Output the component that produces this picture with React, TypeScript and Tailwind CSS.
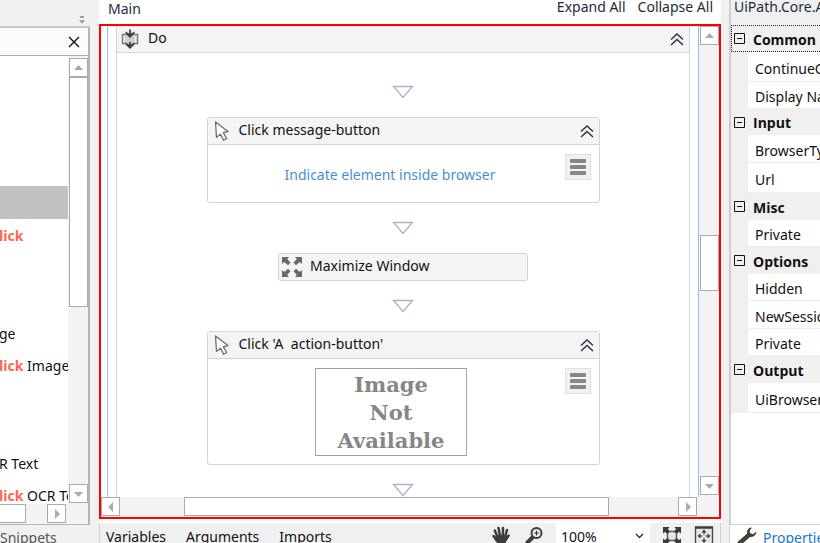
import React from "react";

type Direction = "up" | "down" | "left" | "right";

const arrowPoints: Record<Direction, string> = {
  up: "0,7 4.5,2 9,7",
  down: "0,3 4.5,8 9,3",
  left: "7,0 2,5 7,10",
  right: "3,0 8,5 3,10",
};

function ScrollButton({ direction }: { direction: Direction }) {
  return (
    <button
      type="button"
      aria-label={`Scroll ${direction}`}
      className="flex size-[19px] shrink-0 items-center justify-center border border-[#ababab] bg-white"
    >
      <svg width="10" height="10" viewBox="0 0 10 10" aria-hidden="true">
        <polygon points={arrowPoints[direction]} fill="#ababab" />
      </svg>
    </button>
  );
}

function DoubleChevron() {
  return (
    <button type="button" aria-label="Collapse" className="flex size-5 items-center justify-center">
      <svg width="14" height="14" viewBox="0 0 14 14" fill="none" stroke="#273245" strokeWidth="1.4" aria-hidden="true">
        <path d="M1 7.500 7 2 13 7.500M1 13 7 7.500 13 13" />
      </svg>
    </button>
  );
}

function CursorIcon() {
  return (
    <svg width="16" height="20" viewBox="0 0 16 20" fill="#fff" stroke="#6e6e6e" strokeWidth="1.3" strokeLinejoin="round" aria-hidden="true">
      <path d="M2.500 1 15 10.500 10.300 11.600 13.600 17.500 10.600 19.300 7.600 13.200 3.500 16.300Z" />
    </svg>
  );
}

function SequenceIcon() {
  return (
    <svg width="18" height="20" viewBox="0 0 18 20" aria-hidden="true">
      <path d="M4 5H14V15H4Z" fill="#d0d0d0" />
      <path d="M5 5.500H1.500V14.500H5M13 5.500H16.500V14.500H13" fill="none" stroke="#777" strokeWidth="1.500" />
      <path d="M9 .5V6M9 13V18" fill="none" stroke="#404040" strokeWidth="1.800" />
      <path d="M4.500 2.500 9 5 13.500 2.500V4.500L9 9 4.500 4.500ZM4.500 13.500 9 16 13.500 13.500V15.500L9 20 4.500 15.500Z" fill="#404040" />
    </svg>
  );
}

function MaximizeIcon() {
  return (
    <svg width="20" height="20" viewBox="0 0 20 20" fill="#686868" aria-hidden="true">
      <path d="M0 0H7L5.200 2 8.500 5.800 6 8.200 2.300 5 0 7Z" />
      <path d="M20 0V7L17.700 5 14 8.200 11.500 5.800 14.800 2 13 0Z" />
      <path d="M0 20V13L2.300 15 6 11.800 8.500 14.200 5.200 18 7 20Z" />
      <path d="M20 20H13L14.800 18 11.500 14.200 14 11.800 17.700 15 20 13Z" />
    </svg>
  );
}

function Connector() {
  return (
    <svg className="mx-auto block" width="22" height="14" viewBox="0 0 22 14" fill="none" stroke="#a9b4c6" strokeWidth="1.4" aria-hidden="true">
      <path d="M1.500 1.500H20.500L11 12.500Z" />
    </svg>
  );
}

function MenuButton() {
  return (
    <button
      type="button"
      aria-label="Options menu"
      className="absolute top-[9px] right-2 flex size-[26px] flex-col items-center justify-center gap-[2px] border border-[#dbe0ea] bg-[#f1f1f1]"
    >
      <span className="h-1 w-4 rounded-[1px] bg-[#868686]" />
      <span className="h-1 w-4 rounded-[1px] bg-[#868686]" />
      <span className="h-1 w-4 rounded-[1px] bg-[#868686]" />
    </button>
  );
}

function ActivityCard({ title, children }: { title: string; children: React.ReactNode }) {
  return (
    <article className="mx-auto w-[393px] rounded-[3px] border border-[#d3d3d3] bg-white">
      <header className="flex h-[27px] items-center border-b border-[#d3d3d3] bg-[#f4f4f4] pr-[2px] pl-[5px]">
        <CursorIcon />
        <h3 className="ml-[10px] flex-1 pb-[2px] whitespace-pre">{title}</h3>
        <DoubleChevron />
      </header>
      <div className="relative">
        {children}
        <MenuButton />
      </div>
    </article>
  );
}

const treeRows: { match?: string; rest?: string; selected?: boolean }[] = [
  {},
  {},
  {},
  {},
  { selected: true },
  { match: "lick" },
  {},
  {},
  { rest: "ge" },
  { match: "lick", rest: " Image" },
  {},
  {},
  { rest: "R Text" },
  { match: "lick", rest: " OCR Text" },
];

function ActivitiesPanel() {
  return (
    <aside className="flex w-[99px] shrink-0 flex-col bg-[#f1f1f1] pr-[9px]">
      <div className="flex h-7 shrink-0 items-end justify-end border-b-2 border-[#c6c6c6] pr-1 pb-[2px]">
        <svg width="8" height="8" viewBox="0 0 8 8" fill="#a0a0a0" aria-hidden="true">
          <path d="M2 0H6V2H2ZM1 4H7L4 8Z" />
        </svg>
      </div>
      <div className="flex min-h-0 flex-1 flex-col border-r-2 border-b border-[#b4b4b4]">
        <div className="flex h-7 shrink-0 items-center justify-end border-b border-[#ababab] bg-[#fcfcfc] pr-2">
          <button type="button" aria-label="Clear search">
            <svg width="12" height="12" viewBox="0 0 12 12" stroke="#111" strokeWidth="1.4" aria-hidden="true">
              <path d="M1 1 11 11M11 1 1 11" />
            </svg>
          </button>
        </div>
        <div className="flex min-h-0 flex-1">
          <ul className="min-w-0 flex-1 overflow-hidden bg-white">
            {treeRows.map((row, i) => (
              <li
                key={i}
                className={`-ml-px flex items-center pt-[2px] whitespace-pre odd:h-[33px] even:h-8 ${row.selected ? "bg-[#c2c2c2]" : ""}`}
              >
                {row.match && <b className="font-['Open_Sans',sans-serif] text-[#ff6550]">{row.match}</b>}
                {row.rest}
              </li>
            ))}
          </ul>
          <div className="flex w-5 shrink-0 flex-col items-start bg-[#f3f3f3] pt-[2px] pb-px pl-px">
            <ScrollButton direction="up" />
            <div className="h-[230px] w-[19px] border border-[#ababab] bg-white" />
            <div className="flex-1" />
            <ScrollButton direction="down" />
          </div>
        </div>
        <div className="flex h-5 shrink-0 items-start bg-[#f3f3f3] pr-[22px]">
          <div className="h-[19px] w-[26px] border border-l-0 border-[#ababab] bg-white" />
          <div className="flex-1" />
          <ScrollButton direction="right" />
        </div>
      </div>
      <div className="h-[18px] shrink-0 pt-1 leading-[18px] text-[#555]">Snippets</div>
    </aside>
  );
}

function HandIcon() {
  return (
    <svg width="18" height="20" viewBox="0 0 18 20" fill="none" stroke="#3c3c3c" strokeWidth="2.500" strokeLinecap="round" aria-hidden="true">
      <path d="M5.500 11 2.800 4.500M8 10 6.500 2M10.800 10 11 2M13 11 15 4M4.500 14 1.500 10M13.500 14 16.600 9.500" />
      <path d="M4.500 9.500H13.500L15.500 12 12 19H7L3.500 14Z" fill="#3c3c3c" strokeWidth="1" />
    </svg>
  );
}

function MagnifierIcon() {
  return (
    <svg width="18" height="20" viewBox="0 0 18 20" fill="none" stroke="#3c3c3c" aria-hidden="true">
      <circle cx="11.500" cy="7" r="5" strokeWidth="2" />
      <path d="M9 7H14M11.500 4.500V9.500" strokeWidth="1.200" />
      <path d="M8 11 1.500 17.500" strokeWidth="4" />
    </svg>
  );
}

function FitIcon() {
  return (
    <svg width="20" height="20" viewBox="0 0 20 20" fill="#3c3c3c" aria-hidden="true">
      <rect x="5.500" y="5.500" width="9" height="9" fill="#e6e6e6" stroke="#555" strokeWidth="1.400" />
      <path d="M1 1H7.500L6 3 8 5.500 5.500 8 3 6 1 7.500ZM19 1H12.500L14 3 12 5.500 14.500 8 17 6 19 7.500ZM1 19H7.500L6 17 8 14.500 5.500 12 3 14 1 12.500ZM19 19H12.500L14 17 12 14.500 14.500 12 17 14 19 12.500Z" />
    </svg>
  );
}

function OverviewIcon() {
  return (
    <svg width="20" height="20" viewBox="0 0 20 20" aria-hidden="true">
      <rect x="1.500" y="1.500" width="17" height="17" fill="#e6e6e6" stroke="#4a4a4a" strokeWidth="1.400" />
      <path d="M1 1.500H19" stroke="#3c3c3c" strokeWidth="2.400" />
      <path d="M10 3.500 12.500 6.500H7.500ZM10 17 12.500 14H7.500ZM3.500 10 6.500 7.500V12.500ZM16.500 10 13.500 7.500V12.500Z" fill="#3c3c3c" />
      <path d="M10 5V8.500M10 12V15M5 10H8.500M11.500 10H15" stroke="#3c3c3c" strokeWidth="1.200" />
    </svg>
  );
}

function DesignerPanel() {
  return (
    <main className="flex min-w-0 flex-1 flex-col bg-white">
      <div className="flex h-6 shrink-0 items-start pr-2 pl-[9px] text-[#1e2a3a]">
        <span className="flex-1 leading-[18px]">Main</span>
        <button type="button" className="mr-3 leading-[14px]">Expand All</button>
        <button type="button" className="leading-[14px]">Collapse All</button>
      </div>

      <div className="flex min-h-0 flex-1 flex-col border-2 border-[#ff0000]">
        <div className="flex min-h-0 flex-1">
          <div className="flex min-w-0 flex-1 pl-[6px]">
            <div className="flex min-w-0 flex-1 border-x border-[#8cc4e8] px-2">
              <section className="min-w-0 flex-1 overflow-hidden border-x border-[#d3d3d3]">
                <header className="flex h-[27px] items-center border-b border-[#d3d3d3] bg-[#f4f4f4] pr-[2px] pl-1">
                  <SequenceIcon />
                  <h2 className="ml-[9px] flex-1 pb-[2px]">Do</h2>
                  <DoubleChevron />
                </header>
                <div className="pt-8">
                  <Connector />
                  <div className="h-[18px]" />
                  <ActivityCard title="Click message-button">
                    <div className="flex h-[57px] items-center justify-center pt-[2px] pr-[26px]">
                      <a href="#indicate" className="text-[#468fd2]">Indicate element inside browser</a>
                    </div>
                  </ActivityCard>
                  <div className="h-[18px]" />
                  <Connector />
                  <div className="h-[18px]" />
                  <article className="mx-auto flex h-7 w-[250px] items-center rounded-[3px] border border-[#d3d3d3] bg-[#f4f4f4] pl-[3px]">
                    <MaximizeIcon />
                    <h3 className="ml-2 pb-[2px]">Maximize Window</h3>
                  </article>
                  <div className="h-[18px]" />
                  <Connector />
                  <div className="h-[18px]" />
                  <ActivityCard title="Click 'A  action-button'">
                    <div className="flex h-[105px] justify-center pt-[9px] pr-6">
                      <div className="h-[88px] w-[152px] border border-[#a3a3a3] pt-[2px] text-center font-['DejaVu_Serif',serif] text-[21px] leading-7 font-bold text-[#868686]">
                        Image
                        <br />
                        Not
                        <br />
                        Available
                      </div>
                    </div>
                  </ActivityCard>
                  <div className="h-[18px]" />
                  <Connector />
                </div>
              </section>
            </div>
          </div>
          <div className="flex w-5 shrink-0 flex-col bg-[#f3f3f3] pb-[2px] pl-px">
            <ScrollButton direction="up" />
            <div className="flex-[190]" />
            <div className="h-[56px] w-[19px] border border-[#ababab] bg-white" />
            <div className="flex-[186]" />
            <ScrollButton direction="down" />
          </div>
        </div>
        <div className="flex h-5 shrink-0 bg-[#f3f3f3] pr-[22px]">
          <ScrollButton direction="left" />
          <div className="flex-[64]" />
          <div className="h-[19px] w-[425px] border border-[#ababab] bg-white" />
          <div className="flex-[70]" />
          <ScrollButton direction="right" />
        </div>
      </div>

      <footer className="mt-1 flex h-5 shrink-0 items-start border-x border-[#cfcfcf] bg-[#f0f0f0] pl-[6px]">
        <nav className="flex flex-1 gap-5 pt-1">
          <button type="button">Variables</button>
          <button type="button">Arguments</button>
          <button type="button">Imports</button>
        </nav>
        <button type="button" aria-label="Pan" className="mt-[3px] mr-[15px]">
          <HandIcon />
        </button>
        <button type="button" aria-label="Zoom" className="mt-[3px] mr-[13px]">
          <MagnifierIcon />
        </button>
        <div className="relative h-5 w-[94px] bg-white">
          <select aria-label="Zoom level" className="h-6 w-full appearance-none bg-transparent pt-[3px] pl-[5px]">
            <option>100%</option>
          </select>
          <svg className="pointer-events-none absolute top-[10px] right-[6px]" width="9" height="6" viewBox="0 0 9 6" fill="none" stroke="#333" strokeWidth="1.400" aria-hidden="true">
            <path d="M1 1 4.500 4.500 8 1" />
          </svg>
        </div>
        <button type="button" aria-label="Fit to screen" className="mt-[3px] ml-3">
          <FitIcon />
        </button>
        <button type="button" aria-label="Overview" className="mt-[3px] mr-[6px] ml-3">
          <OverviewIcon />
        </button>
      </footer>
    </main>
  );
}

const propertyGroups: { name: string; height: string; items: { label: string; height: string }[] }[] = [
  {
    name: "Common",
    height: "h-[27px]",
    items: [
      { label: "ContinueOnError", height: "h-[30px]" },
      { label: "Display Name", height: "h-[27px]" },
    ],
  },
  {
    name: "Input",
    height: "h-[26px]",
    items: [
      { label: "BrowserType", height: "h-7" },
      { label: "Url", height: "h-[30px]" },
    ],
  },
  { name: "Misc", height: "h-[27px]", items: [{ label: "Private", height: "h-[27px]" }] },
  {
    name: "Options",
    height: "h-[27px]",
    items: [
      { label: "Hidden", height: "h-[27px]" },
      { label: "NewSession", height: "h-7" },
      { label: "Private", height: "h-[27px]" },
    ],
  },
  { name: "Output", height: "h-[27px]", items: [{ label: "UiBrowser", height: "h-[30px]" }] },
];

function PropertiesPanel() {
  return (
    <aside className="flex w-[99px] shrink-0 flex-col overflow-hidden bg-[#f0f0f0] pl-2">
      <div className="flex min-h-0 flex-1 flex-col border-b border-l-2 border-[#cfcfcf] bg-white">
        <div className="h-[25px] shrink-0 bg-[#f0f0f0] pl-[3px] leading-[14px] whitespace-nowrap text-[#1e2a3a]">
          UiPath.Core.Activities
        </div>
        {propertyGroups.map((group) => (
          <section key={group.name} className="group bg-[#f0f0f0]">
            <button
              type="button"
              className={`flex w-full items-center gap-2 border-dotted border-[#222] pl-[3px] font-bold group-first-of-type:border-y group-first-of-type:border-l group-first-of-type:pl-[2px] ${group.height}`}
            >
              <svg width="11" height="11" viewBox="0 0 11 11" fill="none" stroke="#111" className="shrink-0" aria-hidden="true">
                <path d="M.5 .5H10.500V10.500H.5ZM3 5.500H8" />
              </svg>
              <span className="pt-[2px] font-['Open_Sans',sans-serif]">{group.name}</span>
            </button>
            <ul className="ml-[17px] bg-white">
              {group.items.map((item) => (
                <li
                  key={item.label}
                  className={`flex items-center border-b border-[#ededed] pt-1 pl-[7px] whitespace-nowrap ${item.height}`}
                >
                  {item.label}
                </li>
              ))}
            </ul>
          </section>
        ))}
      </div>
      <div className="flex h-[18px] shrink-0 items-start border-l border-[#cfcfcf] bg-white pl-[7px]">
        <svg width="20" height="20" viewBox="0 0 20 20" fill="#444034" className="mt-[2px] shrink-0" aria-hidden="true">
          <path d="M15 .5C11.500 .5 9.500 3 10.200 6.500L1 14.500C-.5 16.500 2.500 19.500 4.500 17.500L13 10C16.500 10.500 19.500 8 19.300 4.500L16 7.200 13 6 12.800 3.500Z" />
        </svg>
        <a href="#properties" className="ml-[6px] pt-[3px] text-[#1a78c8]">Properties</a>
      </div>
    </aside>
  );
}

export default function App() {
  return (
    <div className="flex h-screen w-full overflow-hidden bg-[#f1f1f1] font-['Noto_Sans','Open_Sans',sans-serif] text-[14px] leading-5 text-[#111]">
      <ActivitiesPanel />
      <DesignerPanel />
      <PropertiesPanel />
    </div>
  );
}
